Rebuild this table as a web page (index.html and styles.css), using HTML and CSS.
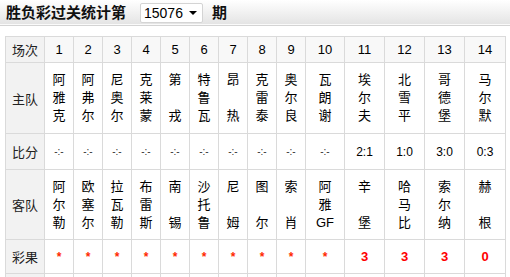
FILE: index.html
```html
<!DOCTYPE html>
<html lang="zh">
<head>
<meta charset="utf-8">
<title>胜负彩过关统计</title>
<link rel="stylesheet" href="styles.css">
</head>
<body>
<div class="topbar">
  <span class="title">胜负彩过关统计第</span>
  <span class="issue-select"><span class="issue-num">15076</span><span class="caret"></span></span>
  <span class="title">期</span>
</div>
<table class="stats">
  <colgroup>
    <col class="c-label">
    <col class="c-n"><col class="c-n"><col class="c-n"><col class="c-n"><col class="c-n"><col class="c-n"><col class="c-n"><col class="c-n"><col class="c-n">
    <col class="c-w">
    <col class="c-x"><col class="c-x"><col class="c-x"><col class="c-y">
  </colgroup>
  <tr class="r-head">
    <th class="lbl">场次</th>
    <td>1</td><td>2</td><td>3</td><td>4</td><td>5</td><td>6</td><td>7</td><td>8</td><td>9</td><td>10</td><td>11</td><td>12</td><td>13</td><td>14</td>
  </tr>
  <tr class="r-team">
    <th class="lbl">主队</th>
    <td>阿<br>雅<br>克</td>
    <td>阿<br>弗<br>尔</td>
    <td>尼<br>奥<br>尔</td>
    <td>克<br>莱<br>蒙</td>
    <td>第<br><br>戎</td>
    <td>特<br>鲁<br>瓦</td>
    <td>昂<br><br>热</td>
    <td>克<br>雷<br>泰</td>
    <td>奥<br>尔<br>良</td>
    <td>瓦<br>朗<br>谢</td>
    <td>埃<br>尔<br>夫</td>
    <td>北<br>雪<br>平</td>
    <td>哥<br>德<br>堡</td>
    <td>马<br>尔<br>默</td>
  </tr>
  <tr class="r-score">
    <th class="lbl">比分</th>
    <td class="dash">-:-</td><td class="dash">-:-</td><td class="dash">-:-</td><td class="dash">-:-</td><td class="dash">-:-</td><td class="dash">-:-</td><td class="dash">-:-</td><td class="dash">-:-</td><td class="dash">-:-</td><td class="dash">-:-</td>
    <td>2:1</td><td>1:0</td><td>3:0</td><td>0:3</td>
  </tr>
  <tr class="r-team r-away">
    <th class="lbl">客队</th>
    <td>阿<br>尔<br>勒</td>
    <td>欧<br>塞<br>尔</td>
    <td>拉<br>瓦<br>勒</td>
    <td>布<br>雷<br>斯</td>
    <td>南<br><br>锡</td>
    <td>沙<br>托<br>鲁</td>
    <td>尼<br><br>姆</td>
    <td>图<br><br>尔</td>
    <td>索<br><br>肖</td>
    <td>阿<br>雅<br>GF</td>
    <td>辛<br><br>堡</td>
    <td>哈<br>马<br>比</td>
    <td>索<br>尔<br>纳</td>
    <td>赫<br><br>根</td>
  </tr>
  <tr class="r-result">
    <th class="lbl">彩果</th>
    <td class="star">*</td><td class="star">*</td><td class="star">*</td><td class="star">*</td><td class="star">*</td><td class="star">*</td><td class="star">*</td><td class="star">*</td><td class="star">*</td><td class="star">*</td>
    <td class="res">3</td><td class="res">3</td><td class="res">3</td><td class="res">0</td>
  </tr>
  <tr class="r-extra">
    <th class="lbl">&nbsp;</th>
    <td></td><td></td><td></td><td></td><td></td><td></td><td></td><td></td><td></td><td></td><td></td><td></td><td></td><td></td>
  </tr>
</table>
</body>
</html>
```
FILE: styles.css
```css
html, body {
  margin: 0;
  padding: 0;
  background: #fff;
}
body {
  font-family: "Liberation Sans", "Noto Sans CJK SC", sans-serif;
  color: #000;
}
.topbar {
  height: 24px;
  padding-left: 6px;
  display: flex;
  align-items: center;
  gap: 9px;
  background: linear-gradient(#ffffff, #e4e4e4);
  border-bottom: 1px solid #fafafa;
  box-shadow: 0 1px 0 #d4d4d4;
}
.title {
  font-family: "Noto Sans CJK SC", sans-serif;
  font-weight: bold;
  font-size: 15px;
  line-height: 18px;
  color: #111;
}
.issue-select {
  margin-left: 5px;
  width: 58px;
  height: 18px;
  box-sizing: content-box;
  border: 1px solid #d4d4d4;
  border-radius: 2px;
  background: #fff;
  display: flex;
  align-items: center;
  padding-left: 3px;
  gap: 6px;
  margin-top: 1px;
}
.issue-num {
  font-size: 14px;
  line-height: 16px;
  color: #000;
}
.caret {
  width: 0;
  height: 0;
  border-left: 4px solid transparent;
  border-right: 4px solid transparent;
  border-top: 4px solid #000;
  margin-top: 1px;
}
.stats {
  margin: 11px 0 0 5px;
  width: 500px;
  table-layout: fixed;
  border-collapse: collapse;
  font-size: 12px;
}
.c-label { width: 39px; }
.c-n { width: 29px; }
.c-w { width: 39px; }
.c-x { width: 40px; }
.c-y { width: 41px; }
.stats th, .stats td {
  border: 1px solid #dadada;
  padding: 0;
  text-align: center;
  vertical-align: middle;
}
.stats .lbl {
  background: #f2f2f2;
  font-family: "Noto Sans CJK SC", sans-serif;
  font-weight: normal;
  font-size: 13px;
  color: #222;
}
.r-head td {
  background: #f8f8f8;
  height: 25px;
  font-size: 13px;
}
.r-team td {
  height: 70px;
  font-family: "Liberation Sans", "Noto Sans CJK SC", sans-serif;
  font-size: 13px;
  line-height: 18px;
}
.r-away td {
  height: 69px;
}
.r-score td {
  height: 35px;
  font-size: 12px;
}
.r-score td.dash {
  font-size: 10px;
  color: #333;
}
.r-result td {
  height: 33px;
}
.star {
  color: #ff2a00;
  font-size: 12px;
  font-weight: bold;
}
.res {
  color: #ff0000;
  font-size: 13px;
  font-weight: bold;
}
.r-extra th, .r-extra td {
  height: 20px;
}
```
